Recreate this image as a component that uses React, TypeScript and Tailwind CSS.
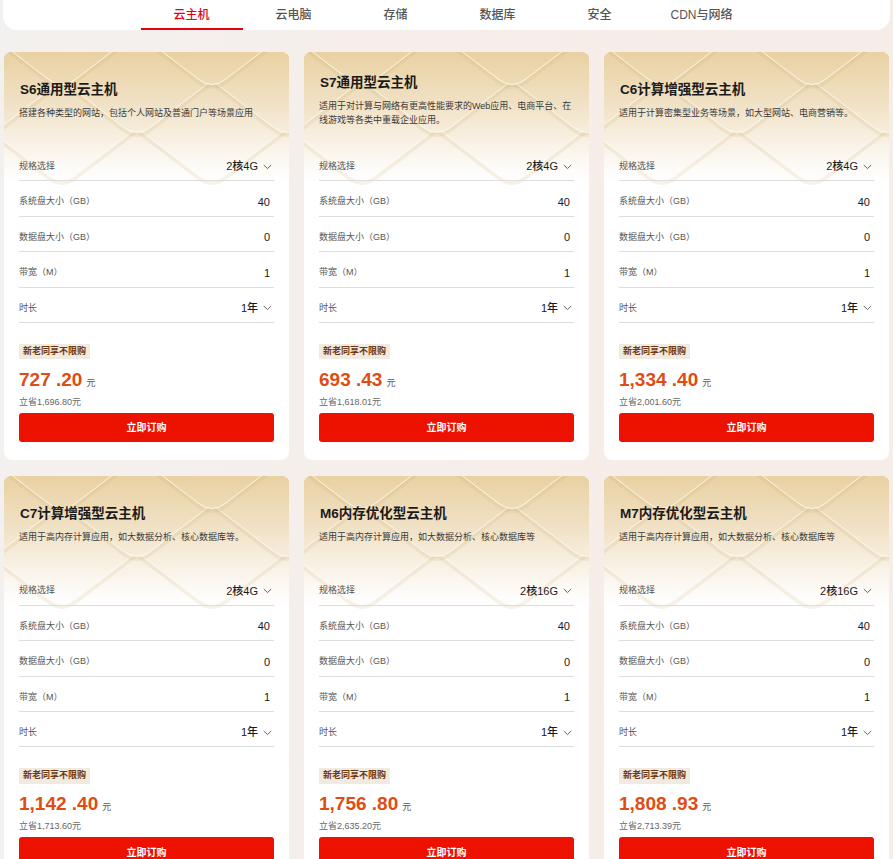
import React from "react";

const tabs = ["云主机", "云电脑", "存储", "数据库", "安全", "CDN与网络"];

const products = [
  {
    name: "S6通用型云主机",
    desc: "搭建各种类型的网站，包括个人网站及普通门户等场景应用",
    spec: "2核4G",
    price: "727 .20",
    save: "立省1,696.80元",
  },
  {
    name: "S7通用型云主机",
    desc: "适用于对计算与网络有更高性能要求的Web应用、电商平台、在线游戏等各类中重载企业应用。",
    spec: "2核4G",
    price: "693 .43",
    save: "立省1,618.01元",
  },
  {
    name: "C6计算增强型云主机",
    desc: "适用于计算密集型业务等场景，如大型网站、电商营销等。",
    spec: "2核4G",
    price: "1,334 .40",
    save: "立省2,001.60元",
  },
  {
    name: "C7计算增强型云主机",
    desc: "适用于高内存计算应用，如大数据分析、核心数据库等。",
    spec: "2核4G",
    price: "1,142 .40",
    save: "立省1,713.60元",
  },
  {
    name: "M6内存优化型云主机",
    desc: "适用于高内存计算应用，如大数据分析、核心数据库等",
    spec: "2核16G",
    price: "1,756 .80",
    save: "立省2,635.20元",
  },
  {
    name: "M7内存优化型云主机",
    desc: "适用于高内存计算应用，如大数据分析、核心数据库等",
    spec: "2核16G",
    price: "1,808 .93",
    save: "立省2,713.39元",
  },
];

function Chevron() {
  return (
    <svg width="9" height="6" viewBox="0 0 9 6" className="ml-[5px]">
      <polyline points="0.8,1 4.5,4.6 8.2,1" fill="none" stroke="#666" strokeWidth="1" />
    </svg>
  );
}

// scale-like wave decoration in the card header, rows drawn bottom-up so upper scales overlap lower ones
function Waves({ id }: { id: string }) {
  const rows: { v: string; fill: string }[][] = [];
  for (let r = 0; r < 3; r++) {
    const row: { v: string; fill: string }[] = [];
    for (let c = -1; c < 3; c++) {
      const cx = c * 150 + (r % 2) * 75 + 58;
      const by = r * 48 + 35;
      const v = `M${cx - 95} ${by - 70} L${cx - 14} ${by - 8} Q${cx} ${by + 3} ${cx + 14} ${by - 8} L${cx + 95} ${by - 70}`;
      row.push({ v, fill: `${v} L${cx + 95} -10 L${cx - 95} -10 Z` });
    }
    rows.push(row);
  }
  return (
    <svg
      className="absolute left-0 top-0 w-full h-[135px] pointer-events-none"
      viewBox="0 0 285 135"
      preserveAspectRatio="none"
    >
      <defs>
        <linearGradient id={id} x1="0" y1="0" x2="0" y2="135" gradientUnits="userSpaceOnUse">
          <stop offset="0" stopColor="#e9d1a2" />
          <stop offset="0.37" stopColor="#f0e1c4" />
          <stop offset="0.59" stopColor="#f6eddc" />
          <stop offset="0.81" stopColor="#fcf9f4" />
          <stop offset="0.96" stopColor="#ffffff" />
        </linearGradient>
      </defs>
      {rows
        .slice()
        .reverse()
        .map((row, ri) => (
          <g key={ri}>
            {row.map((s, i) => (
              <g key={i}>
                <path d={s.v} transform="translate(0 2.5)" fill="none" stroke="#c5a064" strokeOpacity="0.14" strokeWidth="4" />
                <path d={s.fill} fill={`url(#${id})`} />
                <path d={s.v} fill="none" stroke="#fffbf2" strokeOpacity="0.85" strokeWidth="1" />
              </g>
            ))}
          </g>
        ))}
    </svg>
  );
}

function Row({ label, value, select }: { label: string; value: string; select?: boolean }) {
  return (
    <div className="flex items-center justify-between h-[35.4px] pt-[7px] border-b border-[#dedede]">
      <span className="text-[9px] text-[#555]">{label}</span>
      <span className={"flex items-center text-[11px] font-medium text-[#1a1a1a] " + (select ? "pr-[2px]" : "pr-[4px]")}>
        {value}
        {select && <Chevron />}
      </span>
    </div>
  );
}

function Card({ p, idx }: { p: (typeof products)[number]; idx: number }) {
  return (
    <div className="relative rounded-[8px] overflow-hidden bg-[linear-gradient(180deg,#e9d1a2_0px,#f0e1c4_50px,#f6eddc_80px,#fcf9f4_110px,#ffffff_130px)]">
      <Waves id={"wg" + idx} />
      <div className="relative px-[15px] pb-[18px]">
        <div className="h-[94px] pt-[3px] flex flex-col justify-center">
          <div className="text-[13.5px] leading-[16px] font-bold text-[#1a1a1a] pl-[1px]">{p.name}</div>
          <div className="mt-[8px] text-[9px] leading-[14px] text-[#3a3a3a]">{p.desc}</div>
        </div>
        <Row label="规格选择" value={p.spec} select />
        <Row label="系统盘大小（GB）" value="40" />
        <Row label="数据盘大小（GB）" value="0" />
        <Row label="带宽（M）" value="1" />
        <Row label="时长" value="1年" select />
        <div className="mt-[21px] inline-flex h-[15.5px] items-center px-[4px] bg-[#f1eae1] text-[9px] font-bold text-[#6e3812]">
          新老同享不限购
        </div>
        <div className="mt-[7px] flex items-baseline leading-[24px]">
          <span className="text-[19px] font-bold text-[#df4c14]">{p.price}</span>
          <span className="ml-[4px] text-[9px] text-[#555]">元</span>
        </div>
        <div className="mt-[1px] text-[9px] leading-[12px] text-[#666]">{p.save}</div>
        <button className="mt-[5px] w-full h-[29.5px] rounded-[3px] bg-[#ed1200] text-white text-[10px] font-bold">
          立即订购
        </button>
      </div>
    </div>
  );
}

export default function App() {
  return (
    <div
      className="min-h-screen bg-[linear-gradient(90deg,#f3f1ef,#f6eeea_50%,#f6ece8)] pb-[20px]"
      style={{ fontFamily: '"Liberation Sans", "Noto Sans CJK SC", sans-serif' }}
    >
      <div className="mx-[3px] h-[30px] bg-white rounded-b-[14px] flex justify-center">
        {tabs.map((t, i) => (
          <div
            key={t}
            className={
              "w-[102px] flex items-center justify-center text-[12px] font-medium border-b-2 pt-[1px] " +
              (i === 0 ? "text-[#e60012] border-[#e60012]" : "text-[#555] border-transparent")
            }
          >
            {t}
          </div>
        ))}
      </div>
      <div className="mt-[22px] px-[4px] grid grid-cols-3 gap-x-[15px] gap-y-[16px]">
        {products.map((p, i) => (
          <Card key={p.name} p={p} idx={i} />
        ))}
      </div>
    </div>
  );
}
